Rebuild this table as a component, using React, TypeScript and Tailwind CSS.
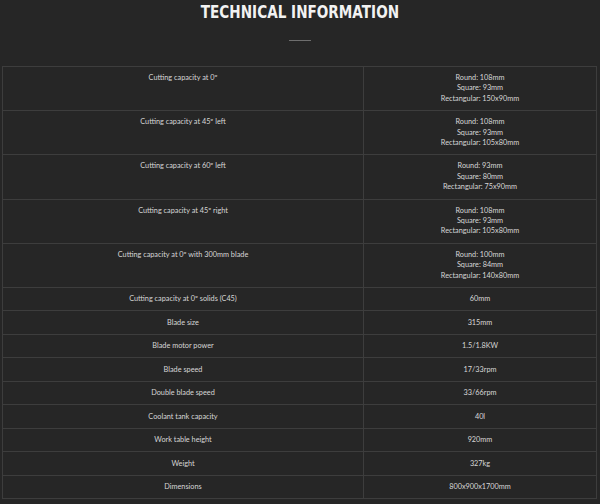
const rows: [string, string[]][] = [
  ["Cutting capacity at 0º", ["Round: 108mm", "Square: 93mm", "Rectangular: 150x90mm"]],
  ["Cutting capacity at 45º left", ["Round: 108mm", "Square: 93mm", "Rectangular: 105x80mm"]],
  ["Cutting capacity at 60º left", ["Round: 93mm", "Square: 80mm", "Rectangular: 75x90mm"]],
  ["Cutting capacity at 45º right", ["Round: 108mm", "Square: 93mm", "Rectangular: 105x80mm"]],
  ["Cutting capacity at 0º with 300mm blade", ["Round: 100mm", "Square: 84mm", "Rectangular: 140x80mm"]],
  ["Cutting capacity at 0º solids (C45)", ["60mm"]],
  ["Blade size", ["315mm"]],
  ["Blade motor power", ["1.5/1.8KW"]],
  ["Blade speed", ["17/33rpm"]],
  ["Double blade speed", ["33/66rpm"]],
  ["Coolant tank capacity", ["40l"]],
  ["Work table height", ["920mm"]],
  ["Weight", ["327kg"]],
  ["Dimensions", ["800x900x1700mm"]],
];

export default function App() {
  return (
    <div className="w-[600px] h-[504px] bg-[#262626] overflow-hidden font-['Lato',sans-serif]">
      {/* heading */}
      <div className="flex justify-center pt-[1px]">
        <h2 className="scale-x-[0.8] text-[17px] leading-[22px] font-bold text-[#f2f2f2] font-['DejaVu_Sans',sans-serif] whitespace-nowrap">
          TECHNICAL INFORMATION
        </h2>
      </div>
      <div className="mx-auto mt-[16.5px] w-[22px] h-[1.5px] bg-[#6e6e6e]"></div>

      <table className="ml-[2px] mt-[25px] w-[595px] border-collapse table-fixed text-[7.3px] leading-[10.35px] text-[#d6d6d6]">
        <colgroup>
          <col className="w-[361px]" />
          <col />
        </colgroup>
        <tbody>
          {rows.map(([label, values]) => (
            <tr key={label}>
              <td className="border border-[#3d3d3d] py-[6.08px] px-2 text-center align-top">{label}</td>
              <td className="border border-[#3d3d3d] py-[6.08px] px-2 text-center align-top">
                {values.map((v) => (
                  <div key={v}>{v}</div>
                ))}
              </td>
            </tr>
          ))}
        </tbody>
      </table>
    </div>
  );
}
